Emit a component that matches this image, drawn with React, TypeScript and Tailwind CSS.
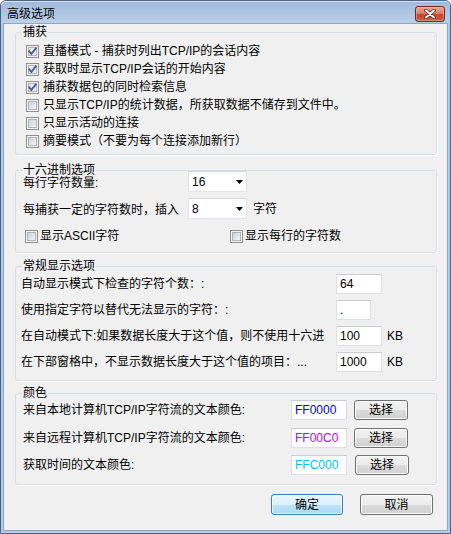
import React from "react";

function CheckBox({ checked }: { checked: boolean }) {
  return (
    <svg width="13" height="13" viewBox="0 0 13 13" className="shrink-0 block">
      <defs>
        <linearGradient id="cbInner" x1="0" y1="0" x2="1" y2="1">
          <stop offset="0" stopColor="#cbcfd5" />
          <stop offset="1" stopColor="#f7f7f7" />
        </linearGradient>
        <linearGradient id="cbInnerC" x1="0" y1="0" x2="1" y2="1">
          <stop offset="0" stopColor="#dfe2e6" />
          <stop offset="1" stopColor="#fbfbfb" />
        </linearGradient>
      </defs>
      <rect x="0.5" y="0.5" width="12" height="12" fill="#f4f4f4" stroke="#8e8f8f" />
      <rect x="2.5" y="2.5" width="8" height="8" fill={checked ? "url(#cbInnerC)" : "url(#cbInner)"} stroke="#b0b4ba" />
      {checked && (
        <path d="M3.2 6.4 L5.4 8.9 L9.8 3.4" stroke="#4a5f97" strokeWidth="1.9" fill="none" strokeLinecap="square" />
      )}
    </svg>
  );
}

function CheckRow({ checked, label }: { checked: boolean; label: string }) {
  return (
    <div className="h-[18px] flex items-center gap-[4px] whitespace-nowrap">
      <CheckBox checked={checked} />
      <span>{label}</span>
    </div>
  );
}

function Group({ title, className, children }: { title: string; className?: string; children: React.ReactNode }) {
  return (
    <div
      className={`relative ml-[11px] mr-[10px] border border-[#d5dfe5] rounded-[3px] shadow-[1px_1px_0_#ffffff] ${className ?? ""}`}
    >
      <span className="absolute left-[6px] -top-[7px] bg-[#f0f0f0] px-[1px] leading-[12px] whitespace-nowrap">
        {title}
      </span>
      {children}
    </div>
  );
}

function Dropdown({ value }: { value: string }) {
  return (
    <div className="w-[59px] h-[21px] bg-white border border-[#e2e5ea] border-t-[#d3d7dd] flex items-center pl-[3px] shrink-0">
      <span className="leading-[16px]">{value}</span>
      <svg width="7" height="4" viewBox="0 0 7 4" className="ml-auto mr-[3px] block">
        <path d="M0 0H7L3.5 4Z" fill="#000" />
      </svg>
    </div>
  );
}

function TextBox({ value, w, color }: { value: string; w: string; color?: string }) {
  return (
    <div
      className={`${w} h-[20px] bg-white border border-[#dde1e6] border-t-[#c9cdd3] flex items-center pl-[3px] shrink-0 leading-[16px]`}
      style={color ? { color } : undefined}
    >
      {value}
    </div>
  );
}

function Btn({ label, def, className }: { label: string; def?: boolean; className?: string }) {
  return (
    <div
      className={`flex items-center justify-center rounded-[3px] border leading-[16px] ${
        def
          ? "border-[#3c7fb1] bg-[linear-gradient(#eaf6fd_0%,#d9f0fc_50%,#bee6fd_50%,#a7d9f5_100%)] shadow-[inset_0_0_0_1px_#ffffffb0]"
          : "border-[#707070] bg-[linear-gradient(#f2f2f2_0%,#ebebeb_50%,#dddddd_50%,#cfcfcf_100%)] shadow-[inset_0_0_0_1px_#fcfcfc]"
      } ${className ?? ""}`}
    >
      {label}
    </div>
  );
}

export default function App() {
  return (
    <div className="w-[451px] h-[534px] bg-[#b4cae5] border border-[#4a6384] rounded-t-[6px] flex flex-col px-[2px] pb-[2px] text-[12px] text-black font-['Liberation_Sans','Noto_Sans_CJK_SC',sans-serif] overflow-hidden">
      {/* Title bar */}
      <div className="h-[22px] -mx-[2px] px-[6px] flex items-center bg-gradient-to-b from-[#a1badb] to-[#bbd1ea] rounded-t-[5px] shadow-[inset_0_1px_0_#d6e3f2]">
        <span className="text-[12px] leading-[16px] mt-[2px] font-['Noto_Sans_CJK_SC',sans-serif]">高级选项</span>
        <div className="ml-auto mr-[-1px] mt-[3px] w-[30px] h-[16px] rounded-[3px] border border-[#6e2b24] bg-[linear-gradient(#e9a797_0%,#d9806c_45%,#c5452f_55%,#d0614c_100%)] shadow-[inset_0_0_0_1px_#f0b8aa80] flex items-center justify-center">
          <svg width="12" height="10" viewBox="0 0 12 10" className="block">
            <path d="M2 1.5 L10 8.5 M10 1.5 L2 8.5" stroke="#5a1d16" strokeWidth="3.6" strokeLinecap="round" />
            <path d="M2 1.5 L10 8.5 M10 1.5 L2 8.5" stroke="#ffffff" strokeWidth="2" strokeLinecap="round" />
          </svg>
        </div>
      </div>

      {/* Client area */}
      <div className="flex-1 bg-[#f0f0f0] border border-[#8fa6c3] flex flex-col">
        <Group title="捕获" className="mt-[8px] pt-[9px] pb-[4px] pl-[10px]">
          <CheckRow checked label="直播模式 - 捕获时列出TCP/IP的会话内容" />
          <CheckRow checked label="获取时显示TCP/IP会话的开始内容" />
          <CheckRow checked label="捕获数据包的同时检索信息" />
          <CheckRow checked={false} label="只显示TCP/IP的统计数据，所获取数据不储存到文件中。" />
          <CheckRow checked={false} label="只显示活动的连接" />
          <CheckRow checked={false} label="摘要模式（不要为每个连接添加新行）" />
        </Group>

        <Group title="十六进制选项" className="mt-[15px] pt-0 pb-[7px] pl-[7px]">
          <div className="relative h-[21px] flex items-center">
            <span className="w-[165px] leading-[12px] mt-[3px]">每行字符数量:</span>
            <Dropdown value="16" />
          </div>
          <div className="h-[21px] mt-[6px] flex items-center">
            <span className="w-[165px] leading-[16px] mt-[2px]">每捕获一定的字符数时，插入</span>
            <Dropdown value="8" />
            <span className="ml-[6px] leading-[16px]">字符</span>
          </div>
          <div className="h-[18px] mt-[8px] flex items-center">
            <div className="w-[205px] ml-[2px] flex items-center gap-[2px]">
              <CheckBox checked={false} />
              <span>显示ASCII字符</span>
            </div>
            <div className="flex items-center gap-[2px]">
              <CheckBox checked={false} />
              <span>显示每行的字符数</span>
            </div>
          </div>
        </Group>

        <Group title="常规显示选项" className="mt-[13px] pt-[7px] pb-[8px] pl-[5px] flex flex-col gap-[6px]">
          <div className="h-[20px] flex items-center">
            <span className="w-[315px] leading-[16px] whitespace-nowrap">自动显示模式下检查的字符个数：:</span>
            <TextBox value="64" w="w-[46px]" />
          </div>
          <div className="h-[20px] flex items-center">
            <span className="w-[315px] leading-[16px] whitespace-nowrap">使用指定字符以替代无法显示的字符：:</span>
            <TextBox value="." w="w-[35px]" />
          </div>
          <div className="h-[20px] flex items-center">
            <span className="w-[315px] leading-[16px] whitespace-nowrap">在自动模式下:如果数据长度大于这个值，则不使用十六进</span>
            <TextBox value="100" w="w-[46px]" />
            <span className="ml-[5px] leading-[16px]">KB</span>
          </div>
          <div className="h-[20px] flex items-center">
            <span className="w-[315px] leading-[16px] whitespace-nowrap">在下部窗格中，不显示数据长度大于这个值的项目：...</span>
            <TextBox value="1000" w="w-[46px]" />
            <span className="ml-[5px] leading-[16px]">KB</span>
          </div>
        </Group>

        <Group title="颜色" className="mt-[12px] pt-[6px] pb-[9px] pl-[7px]">
          <div className="h-[20px] flex items-center">
            <span className="w-[268px] leading-[16px] whitespace-nowrap">来自本地计算机TCP/IP字符流的文本颜色:</span>
            <TextBox value="FF0000" w="w-[56px]" color="#0000ff" />
            <Btn label="选择" className="ml-[7px] w-[54px] h-[20px]" />
          </div>
          <div className="h-[20px] mt-[8px] flex items-center">
            <span className="w-[268px] leading-[16px] whitespace-nowrap">来自远程计算机TCP/IP字符流的文本颜色:</span>
            <TextBox value="FF00C0" w="w-[56px]" color="#c000ff" />
            <Btn label="选择" className="ml-[7px] w-[54px] h-[20px]" />
          </div>
          <div className="h-[20px] mt-[7px] flex items-center">
            <span className="w-[268px] leading-[16px] whitespace-nowrap">获取时间的文本颜色:</span>
            <TextBox value="FFC000" w="w-[56px]" color="#00c0ff" />
            <Btn label="选择" className="ml-[8px] w-[54px] h-[20px]" />
          </div>
        </Group>

        <div className="mt-[9px] flex justify-end pr-[14px] gap-[17px]">
          <Btn label="确定" def className="w-[72px] h-[21px]" />
          <Btn label="取消" className="w-[73px] h-[21px]" />
        </div>
      </div>
    </div>
  );
}
